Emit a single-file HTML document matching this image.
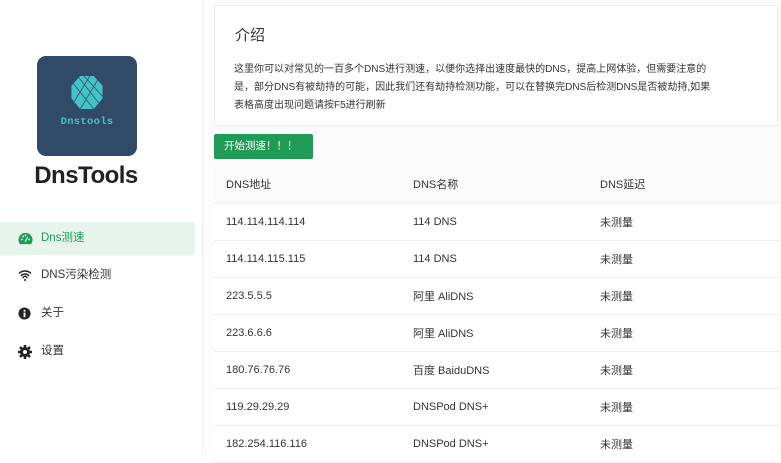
<!DOCTYPE html>
<html><head><meta charset="utf-8"><style>
*{margin:0;padding:0;box-sizing:border-box}
body{width:781px;height:454px;overflow:hidden;background:#fff;font-family:"Liberation Sans","Noto Sans CJK SC",sans-serif;color:#333;position:relative}
.side{position:absolute;left:0;top:0;width:203px;height:454px;border-right:1px solid #eee;background:#fff}
.logo{position:absolute;left:37px;top:56px;width:100px;height:100px;background:#304a67;border-radius:9px}
.logo .t{position:absolute;left:0;right:0;top:60px;text-align:center;font-family:"Liberation Mono",monospace;font-weight:bold;font-size:10.5px;color:#44c2c7;letter-spacing:.3px}
.brand{position:absolute;left:0;width:172px;top:162px;text-align:center;font-size:24px;font-weight:bold;color:#222;letter-spacing:-.5px}
.nav{position:absolute;left:0;width:195px;height:33px;font-size:11.5px;line-height:33px;padding-left:41px;color:#333}
.nav.act{background:#e7f4ec;color:#1e9b55;border-radius:0 3px 3px 0}
.nav svg{position:absolute;left:18px;top:10px}
.main{position:absolute;left:204px;top:0;right:0;bottom:0;background:#fcfcfc}
.card{position:absolute;left:10px;top:5px;width:564px;height:121px;background:#fff;border:1px solid #eee}
.card h2{position:absolute;left:20px;top:18px;font-size:15px;font-weight:normal;color:#333}
.card p{position:absolute;left:19px;top:55px;width:478px;font-size:10px;line-height:18px;color:#333}
.btn{position:absolute;left:10px;top:134px;width:99px;height:25px;background:#1e9b55;color:#fff;font-size:10.5px;line-height:25px;padding-left:10px;border-radius:2px}
table{position:absolute;left:10px;top:166px;width:564px;border-collapse:collapse;background:#fff;font-size:11px}
td,th{height:37px;text-align:left;font-weight:normal;border-bottom:1px solid #eee;color:#333}
th{background:#fafafa}
td:first-child,th:first-child{padding-left:12px;width:199px}
td:nth-child(2),th:nth-child(2){width:187px}
</style></head><body>
<div class="side">
<div class="logo">
<svg style="position:absolute;left:33px;top:19px" width="34" height="35" viewBox="0 0 34 36"><polygon points="10,1 24,1 33,11 33,24 24,35 10,35 1,24 1,11" fill="#44c2c7"/><g stroke="#2a5260" stroke-width=".8" fill="none"><path d="M8,2 L30,30 M14,1 L33,22 M3,9 L24,35 M20,1 L4,27 M28,5 L10,35"/></g></svg>
<div class="t">Dnstools</div></div>
<div class="brand">DnsTools</div>
<div class="nav act" style="top:222px"><svg width="15" height="13" viewBox="0 0 16 14"><path d="M8 1A7.5 7.5 0 0 0 2 13h12A7.5 7.5 0 0 0 8 1z" fill="#1e9b55"/><g fill="#e7f4ec"><circle cx="4" cy="8" r="1"/><circle cx="5.5" cy="4.8" r="1"/><circle cx="8" cy="3.5" r="1"/><circle cx="12" cy="8" r="1"/><path d="M7 10l3-5 .8.4-2.4 5.2z"/></g></svg>Dns测速</div>
<div class="nav" style="top:259px"><svg width="14" height="12" viewBox="0 0 14 12"><g fill="none" stroke="#222" stroke-width="1.5"><path d="M1 4.5a8.5 8.5 0 0 1 12 0M3 7a5 5 0 0 1 8 0M5 9.3a2 2 0 0 1 4 0"/></g><circle cx="7" cy="11" r="1" fill="#222"/></svg>DNS污染检测</div>
<div class="nav" style="top:297px"><svg width="13" height="13" viewBox="0 0 14 14"><circle cx="7" cy="7" r="6.5" fill="#222"/><rect x="6" y="6" width="2" height="5" fill="#fff"/><circle cx="7" cy="4" r="1.1" fill="#fff"/></svg>关于</div>
<div class="nav" style="top:335px"><svg width="14" height="14" viewBox="0 0 14 14"><g fill="#222"><circle cx="7" cy="7" r="5"/><g stroke="#222" stroke-width="2.6"><path d="M7 0v14M0 7h14M2 2l10 10M12 2L2 12"/></g></g><circle cx="7" cy="7" r="2" fill="#fff"/></svg>设置</div>
</div>
<div class="main">
<div class="card"><h2>介绍</h2><p>这里你可以对常见的一百多个DNS进行测速，以便你选择出速度最快的DNS，提高上网体验，但需要注意的是，部分DNS有被劫持的可能，因此我们还有劫持检测功能，可以在替换完DNS后检测DNS是否被劫持,如果表格高度出现问题请按F5进行刷新</p></div>
<div class="btn">开始测速！！！</div>
<table>
<tr><th>DNS地址</th><th>DNS名称</th><th>DNS延迟</th></tr>
<tr><td>114.114.114.114</td><td>114 DNS</td><td>未测量</td></tr>
<tr><td>114.114.115.115</td><td>114 DNS</td><td>未测量</td></tr>
<tr><td>223.5.5.5</td><td>阿里 AliDNS</td><td>未测量</td></tr>
<tr><td>223.6.6.6</td><td>阿里 AliDNS</td><td>未测量</td></tr>
<tr><td>180.76.76.76</td><td>百度 BaiduDNS</td><td>未测量</td></tr>
<tr><td>119.29.29.29</td><td>DNSPod DNS+</td><td>未测量</td></tr>
<tr><td>182.254.116.116</td><td>DNSPod DNS+</td><td>未测量</td></tr>
</table>
</div>
</body></html>
